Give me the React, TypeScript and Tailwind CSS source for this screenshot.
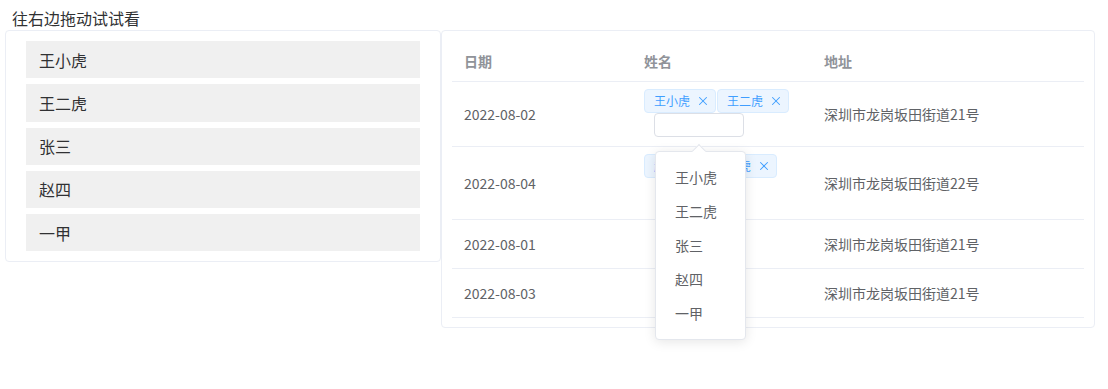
import { X } from "lucide-react";

const FONT = { fontFamily: "'Noto Sans CJK SC', 'Noto Sans', sans-serif" };

const people = ["王小虎", "王二虎", "张三", "赵四", "一甲"];

type Row = { date: string; tags: string[]; addr: string; h: string; input?: boolean };

const rows: Row[] = [
  { date: "2022-08-02", tags: ["王小虎", "王二虎"], addr: "深圳市龙岗坂田街道21号", h: "h-[65px]", input: true },
  { date: "2022-08-04", tags: ["赵四", "王二虎"], addr: "深圳市龙岗坂田街道22号", h: "h-[73px]" },
  { date: "2022-08-01", tags: [], addr: "深圳市龙岗坂田街道21号", h: "h-[49px]" },
  { date: "2022-08-03", tags: [], addr: "深圳市龙岗坂田街道21号", h: "h-[49px]" },
];

function Tag({ name }: { name: string }) {
  return (
    <span className="inline-flex items-center h-[24px] pl-[9px] pr-[5px] gap-[6px] rounded-[4px] border border-[#d9ecff] bg-[#ecf5ff] text-[12px] text-[#409eff]">
      {name}
      <X className="w-[14px] h-[14px]" strokeWidth={1.8} />
    </span>
  );
}

export default function App() {
  return (
    <div className="bg-white w-[1108px] h-[389px] text-[#606266]" style={FONT}>
      <div className="pl-[12px] pt-[7px] h-[30px] text-[16px] leading-[22px] text-[#303133]">往右边拖动试试看</div>
      <div className="flex items-start pl-[5px]">
        <div className="w-[436px] border border-[#ebeef5] rounded-[4px] px-[20px] py-[10px] flex flex-col gap-[6px]">
          {people.map((p) => (
            <div key={p} className="h-[37.25px] bg-[#f0f0f0] pl-[13px] flex items-center text-[16px] text-[#303133]">
              {p}
            </div>
          ))}
        </div>
        <div className="relative w-[654px] border border-[#ebeef5] rounded-[4px] px-[10px] pt-[11px] pb-[9px]">
          <div className="flex h-[40px] items-center border-b border-[#ebeef5] text-[14px] font-bold text-[#909399]">
            <div className="w-[180px] pl-[12px]">日期</div>
            <div className="w-[180px] pl-[12px]">姓名</div>
            <div className="flex-1 pl-[12px]">地址</div>
          </div>
          {rows.map((r) => (
            <div key={r.date} className={`flex ${r.h} border-b border-[#ebeef5] text-[14px]`}>
              <div className="w-[180px] pl-[12px] flex items-center">{r.date}</div>
              <div className="w-[180px] pl-[12px] pt-[7px] flex flex-col">
                {r.tags.length > 0 && (
                  <div className="flex gap-[1px]">
                    {r.tags.map((t) => (
                      <Tag key={t} name={t} />
                    ))}
                  </div>
                )}
                {r.input && (
                  <div className="ml-[10px] w-[90px] h-[24px] border border-[#dcdfe6] rounded-[4px] bg-white" />
                )}
              </div>
              <div className="flex-1 pl-[12px] flex items-center">{r.addr}</div>
            </div>
          ))}
          <div className="absolute left-[213px] top-[120px] w-[91px] bg-white border border-[#e4e7ed] rounded-[4px] shadow-[0_2px_12px_rgba(0,0,0,0.1)] pt-[8px] pb-[9px]">
            <div className="absolute -top-[6px] left-[38px] w-[10px] h-[10px] bg-white border-l border-t border-[#e4e7ed] rotate-45" />
            {people.map((p) => (
              <div key={p} className="relative h-[34px] pl-[19px] flex items-center text-[14px] text-[#606266]">
                {p}
              </div>
            ))}
          </div>
        </div>
      </div>
    </div>
  );
}
